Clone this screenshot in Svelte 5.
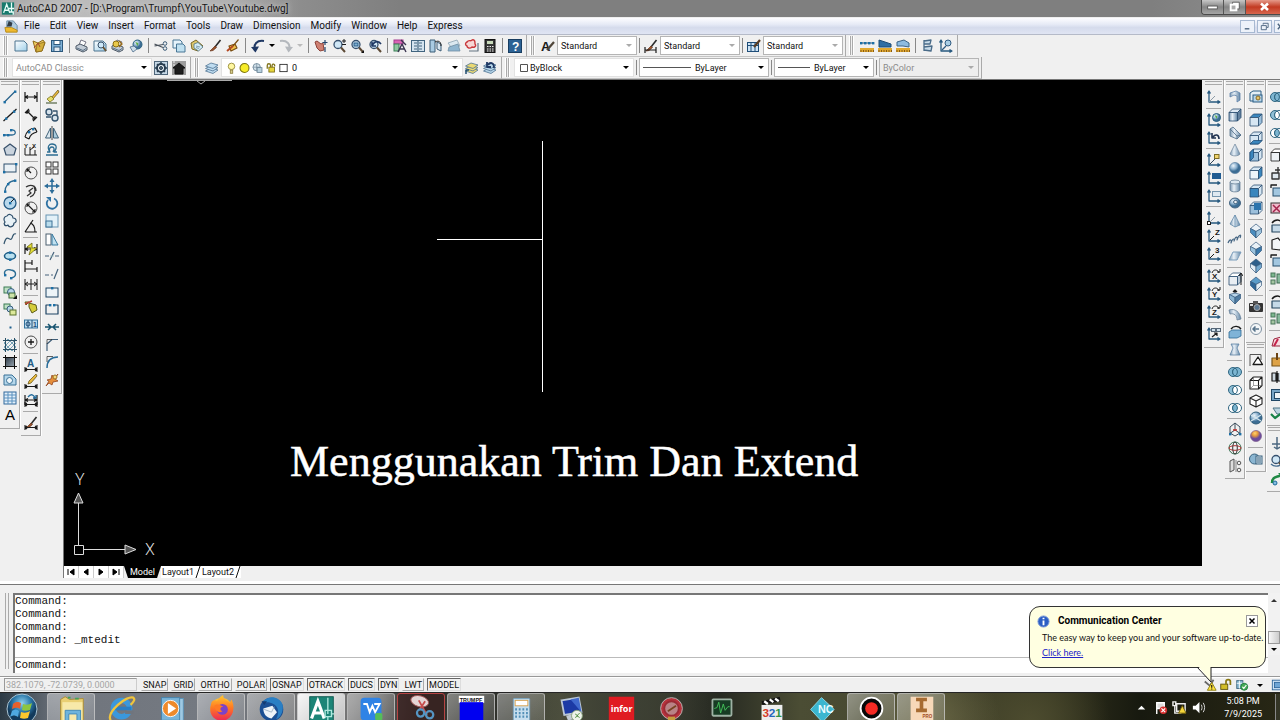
<script>
  const navy = '#1f4e79', ink = '#1a1a1a';
  const p = (d, s = ink, w = 1, f = 'none') => `<path d="${d}" stroke="${s}" stroke-width="${w}" fill="${f}" stroke-linejoin="round"/>`;
  const o = (x, y, r, s = ink, f = 'none', w = 1) => `<circle cx="${x}" cy="${y}" r="${r}" stroke="${s}" stroke-width="${w}" fill="${f}"/>`;
  const b = (x, y, w, h, s = ink, f = 'none') => `<rect x="${x}" y="${y}" width="${w}" height="${h}" stroke="${s}" fill="${f}"/>`;
  const t = (s, x, y, z = 8, f = ink, w = 700) => `<text x="${x}" y="${y}" font-size="${z}" font-weight="${w}" font-family="Liberation Sans, sans-serif" fill="${f}">${s}</text>`;
  const nodes = (...n) => n.map(([x, y]) => `<rect x="${x - 1}" y="${y - 1}" width="2.4" height="2.4" fill="#1d6fa5"/>`).join('');
  const axes = p('M3 2V13H14M1.500 4.500L3 2L4.500 4.500M11.500 11.500L14 13L11.500 14.500', '#27597f', 1.3);
  const cube = (a, c, d) =>
    p('M2 5.500L5.500 2H14L10.500 5.500Z', '#2a4d6e', 0.8, a) + p('M2 5.500H10.500V14H2Z', '#2a4d6e', 0.8, c) + p('M10.500 5.500L14 2V10.500L10.500 14Z', '#2a4d6e', 0.8, d);
  const iso = (a, c, d) =>
    p('M8 1L13.500 5.500L8 8.500L2.500 5.500Z', '#35597c', 0.7, a) + p('M2.500 5.500L8 8.500V15L2.500 9.500Z', '#35597c', 0.7, c) + p('M13.500 5.500L8 8.500V15L13.500 9.500Z', '#35597c', 0.7, d);
  const hi = '#3a86bd', lo = '#d6e6f2', mid = '#9cc0dc';
  const rings = (l, m, r) => o(6, 8, 4.500, '#2f6580', l) + o(10, 8, 4.500, '#2f6580', r) + p('M8 4A4.500 4.500 0 0 1 8 12A4.500 4.500 0 0 1 8 4Z', '#2f6580', 1, m);
  const sheet = p('M2 3H11L14 6V13H2Z', '#4d7590', 1, 'url(#sheet)');
  const printer = p('M5 7L7 2L12 4L10 8', '#667', 0.9, '#fff') + p('M2 8L6 6L13 9V12L9 14L2 11Z', '#4c5866', 1, '#c3ccd6') + p('M3 10L9 12.500L12 10.500', '#5a7085');
  const globe = (x, y, r) => o(x, y, r, '#2a617f', 'url(#ball)') + p(`M${x - r * 0.5} ${y - r * 0.6}l${r * 0.7} ${r * 0.3}l${-r * 0.2} ${r * 0.7}z`, 'none', 0, '#5fae45');
  const lens = o(7, 6.500, 4, '#36506e', '#cfe6f5', 1.3) + p('M10 9.500L14 14', '#5d4a36', 2);
  const brush = p('M13.500 2L8 9', '#2b2b2b', 1.600) + p('M8 8L3 13L6 12.500L9.500 9.500Z', '#67321a', 0.7, '#98532a');
  const pencil = p('M14 1L7 9L5.500 12L8.500 10.500L15 3Z', '#5b4a10', 0.7, '#e9b93c');
  const layers = (f) => ['11', '8.500', '6'].map((y) => `<path d="M1.500 ${y}L7 ${y - 3}L14 ${y - 1}L9 ${+y + 2.500}Z" fill="${f}" stroke="#4f7493" stroke-width=".8"/>`).join('');
  const dim = p('M2 3V13M14 3V13M2 8H14M5 6.500L2 8L5 9.500M11 6.500L14 8L11 9.500', ink, 1.2);
  const lowDim = p('M2 10V15M14 10V15M2 12.500H14M4 11L2 12.500L4 14M12 11L14 12.500L12 14', ink, 1.1);
  const hatch = p('M2 6L6 2M2 10L10 2M2 14L14 2M6 14L14 6M10 14L14 10M2 6L10 14M2 10L6 14M6 2L14 10', '#3e7f9e', 0.7);
  const frame = p('M3.500 1V15M12.500 1V15M1 3.500H15M1 12.500H15', '#2b5065');
  const rule = '<rect x="1" y="10" width="14" height="4" fill="#e2a92f"/>' + p('M2 14V12M4.500 14V12M7 14V12M9.500 14V12M12 14V12M14.500 14V12', '#6e4810', 0.8);

  const icons = {
    new: sheet, open: p('M2 3L7 5L12 2L14 5L11 13L5 14Z', '#8d6b1c', 1, '#f0cf62') + p('M6 6L14 4L11 13L5 14Z', '#8d6b1c', 0.8, '#d3ae3a') + p('M3 10L7 5L9 9', '#a7472f', 1),
    save: b(2.500, 2.500, 11, 11, '#2d587c', '#7fb1d6') + b(5, 2.500, 6, 4, '#2d587c', '#fff') + b(5, 9, 6, 4.500, '#2d587c', '#e2eaf2'),
    plot: printer, preview: sheet + o(9, 7, 3, '#38506a', '#cfe9f8') + p('M11 9L14 13', '#6a5230', 1.800),
    publish: printer + o(6, 6, 3, '#8b6d10', '#e9c84a') + p('M9 3L12 6L9 9', '#9a6d18', 1.4), dwf: globe(9.500, 6.500, 4.500) + p('M2 9L6 8L9 11L5 14Z', '#4b6c89', 0.8, '#cdddea'),
    cut: p('M1.500 6L10 9.500M1.500 8L10 6.500', '#49515a', 1.2) + o(12, 5.500, 1.800, '#3c5c78') + o(12, 10.500, 1.800, '#3c5c78'),
    copy: p('M2 2H9L11 4V10H2Z', '#487695', 1, '#e6f3fb') + p('M5.500 6H12L14 8V14H5.500Z', '#487695', 1, '#bfe0f0'),
    paste: p('M2 5L7 2L14 8L9 13L3 11Z', '#7b6a28', 1, '#dcc66b') + p('M5 6L9 4.500L14 9L9.500 13L5 10Z', '#4f7485', 0.8, '#d5edf5') + p('M7 8L11 9M7 9.500L10 10.500', '#5f8090', 0.7),
    match: brush, block: p('M13.500 1.500L8 8M4 8L10 6L12 10L6 13Z', '#7a4d12', 1.2, '#f0c14a') + p('M2 13L8 8', '#b44822', 2),
    undo: p('M14 3C7 2 3 6 5 13', '#1f3864', 2) + p('M1 9L5.500 14.500L9 8.500Z', 'none', 0, '#1f3864'),
    redo: p('M2 3C9 2 13 6 11 13', '#b4b8bd', 2) + p('M15 9L10.500 14.500L7 8.500Z', 'none', 0, '#b4b8bd'),
    pan: p('M2 4L4 3L8 6L10 5L11 12L7 13L4 10Z', '#8c4137', 1, '#cf8072') + p('M12 2V7M9.500 4.500H14.500M12 9V14', '#24466d', 1.2), zoomrt: lens + p('M11 3H15M13 1V5M11 6.500H15', ink, 1),
    zoomwin: lens + b(5, 5, 4, 3, '#2b5f8a', '#7faed0') + p('M15 12V15H12Z', 'none', 0, '#111'), zoomprev: lens + p('M5 8C8 2 12 3 14 6M5 4V8H9', '#1f3864', 1.600),
    props: b(2, 2, 9, 4, '#a33a8e', '#d965b5') + b(2, 6, 5, 7, '#3a8157', '#8fc7a0') + p('M6 14L10 6L14 14M7 11H13M9 2L14 7', '#3a3550', 1.400), center: b(1.500, 2.500, 13, 11, '#41647f', '#d4e3ee') + p('M4 5H7M4 8H7M4 11H7M9 5H12M9 8H12M9 11H12M8 3V13', '#41647f', 1.200),
    palettes: p('M2 2H7V14H2Z', '#3b5c76', 1, '#a9cbe2') + p('M9 4L13 6V13L9 11Z', '#3b5c76', 1, '#d8e6f0') + p('M7 4C11 2 13 4 13 8', ink), sheetset: p('M2 5L11 2L14 8L5 9Z', '#8ba3b3', 0.8, '#dbe8f0') + p('M3 9L12 6L14 13L2 13Z', '#6f8ea3', 0.8, '#8fb5cf'),
    markup: p('M3 4C5 1 7 4 8 2C11 1 11 4 11 6C13 8 10 10 8 9C6 11 3 10 3 8C1 7 1 5 3 4Z', '#c9383b', 1.400, '#f7d7d5') + p('M5 13H14V5', '#657482', 1.200), calc: b(3, 1.500, 10, 13, '#111', '#353535') + '<path d="M5 3H11V6H5Z" fill="#c7d9b9"/>' + p('M5 8.500H6.500M7.500 8.500H9M10 8.500H11.500M5 11H6.500M7.500 11H9M10 11H11.500M5 13H6.500M7.500 13H9M10 13H11.500', '#eee', 1.200),
    help: '<rect x="1.500" y="1.500" width="13" height="13" fill="#2c6294" stroke="#183d61"/>' + t('?', 5, 12.500, 12, '#fff'), tstyle: t('A', 1, 13, 13) + p('M14 4L7 12', '#50463a', 2.200),
    dstyle: brush + p('M2 9V15M13 9V15M2 12H13', ink, 1.200), tbstyle: b(1.500, 4.500, 11, 9, navy, '#cfe4f5') + p('M1.500 7.500H12.500M5 4.500V13.500M9 4.500V13.500', navy) + p('M14 2L8 9', '#5a3c22', 2.200),
    dist: rule + p('M2 5H14', navy, 1, 'none') + nodes([2, 5], [6, 5], [10, 5], [14, 5]), area: rule + p('M2 9V2L8 4L14 6V9Z', '#1d4c75', 1, '#2f6ea3'), mass: rule + p('M2 8V4L9 2L14 5V9L8 8Z', '#3b6487', 1, '#8dbbe0'),
    list: p('M4 2V13M4 3L11 2L10 6L4 6M4 9L12 8L11 13L4 12', '#4a6c89', 1.300, '#c9dcea'), locate: axes + o(10, 5, 3, '#315c82', '#a9cde4') + p('M8 8L4 12', '#315c82', 1.300),
    line: p('M2.500 13L13 2.500', '#28608a', 1.300) + nodes([2.500, 13], [13, 2.500]), xline: p('M1.500 14L14.500 2', ink, 1.300) + nodes([4, 11.500], [12, 4.500]), pline: p('M2 10H10C15 10 14 4 9 5', '#2b6a92', 1.300) + nodes([2, 10], [6, 10], [9, 5]),
    polygon: p('M8 2L14 6.500L12 13H4L2 6.500Z', '#38516b', 1.200, '#c9d3dd'), rect: b(2, 4, 12, 8, '#2c4f6d', '#eaf1f6') + nodes([2, 12], [14, 4]), arc: p('M3 14C3 8 7 3 13 2.500', '#2b6a92', 1.300) + nodes([3, 13.500], [6, 6], [13, 2.500]),
    circle: o(8, 8, 6, '#245b85', '#b8d8ec', 1.300) + p('M8 8L12 4', ink) + nodes([8, 8]), cloud: p('M5 3C7 0 11 2 11 5C15 5 15 10 12 10C12 14 7 15 6 12C3 14 1 11 3 9C1 7 2 3 5 3Z', '#2f4f6b', 1.200, '#e8f1f6'), spline: p('M2 13C5 1 8 12 10 7C11 4 12 2 14 3', '#34566f', 1.200),
    ellipse: '<ellipse cx="8" cy="8" rx="5.500" ry="3.500" fill="#b9e0ef" stroke="#195a83" stroke-width="1.500"/>' + nodes([8, 4.500], [8, 11.500]), earc: p('M3 9C1 4 6 3 9 4C15 5 15 11 9 12', '#2a6c93', 1.400) + nodes([3, 9], [9, 12]),
    insert: b(2, 3, 7, 6, '#3a7b54', '#bfe0c4') + o(9, 8, 3.500, '#365d7c', '#b6d5ea') + b(7, 9, 6, 5, '#3b6a3b', '#cde2a8') + p('M15 11V15H11Z', 'none', 0, '#111'), mkblock: b(2, 3, 6, 5, '#3a7b54', '#bfe0c4') + o(8, 8, 3, '#365d7c', '#b6d5ea') + b(8, 9, 6, 5, '#5b732c', '#dde99a'), point: '<rect x="7.500" y="7.500" width="2" height="2" fill="#1d5f8d"/>',
    hatch: hatch + frame, gradient: '<rect x="3" y="3" width="10" height="10" fill="url(#dark)"/>' + frame.replace('#2b5065', '#111'), region: p('M2 3H10L14 7V13H2Z', '#397096', 1, '#b5d7eb') + o(7.500, 8.500, 3, '#397096', '#eef7fb'), table: b(2, 2, 12, 12, '#30699b', '#e4f0fa') + p('M2 5H14M2 8H14M2 11H14M6 2V14M10 2V14', '#5b91bf'), mtext: t('A', 3, 13, 15, '#000', 400),
    dlin: dim, dali: p('M2 6L6 2M10 14L14 10M4 4L12 12M4 7V4H7M12 9V12H9', ink, 1.200), darc: p('M2 12C3 7 7 3 12 3M6 14C7 10 9 8 14 7M2 12L6 14M12 3L14 7', ink, 1.200) + nodes([6, 7], [10, 4]), dord: p('M2 13H14M2 13V6M7 13V5M12 13V8M7 8L11 5', ink) + t('Y', 1, 6, 6) + t('X', 9, 6, 6),
    drad: o(8, 8, 6, '#4b4b4b') + p('M8 8L4 4M4 7V4H7', ink, 1.200), djog: p('M3 4C7 1 13 2 13 8M11 3C13 8 12 12 7 14M4 13L8 10L6 8L10 5', '#333', 1.300), ddia: o(8, 8, 6, '#4b4b4b') + p('M4 4L12 12M4 7V4H7M12 9V12H9', ink, 1.100), dang: p('M2 14H14M2 14L10 2M7 5C11 6 12 10 12 14', ink, 1.200),
    quick: dim + p('M9 2L4 6L8 7L6 14L14 7L9 7Z', '#6a6412', 0.8, '#e4df35'), base: p('M2 2V14M9 2V7M14 9V14M2 5H9M2 11H14', ink, 1.200), cont: p('M2 3V14M8 3V14M14 3V14M2 8H14M5 6L2 8L5 10M11 6L14 8L11 10', ink), leader: p('M2 3H6L3 6L2 3M6 4L13 6L14 11L9 14L6 8Z', '#5c5b18', 1, '#d5cc3a') + p('M2 5L9 2', '#b64238', 1.400),
    tol: b(1.500, 4, 13, 8, '#34729c', '#bcdcef') + o(5, 8, 2, navy) + p('M5 4V12M9 4V12', navy) + t('1', 10, 11, 7, navy), cmark: o(8, 8, 6, '#4b4b4b') + p('M8 5V11M5 8H11', ink, 1.300), dedit: lowDim + t('A', 4, 9.500, 10, '#215a83'), dtedit: lowDim + pencil.replace('d="M14 1L7 9L5.500 12L8.500 10.500L15 3Z"', 'd="M13 0L6 7L5 10L8 9L14 2Z"'), dupd: dim + p('M5 5C8 1 11 3 12 6M10 6H13V3', '#226b9b', 1.300) + lowDim, dbrush: brush + lowDim,
    erase: pencil + p('M2 14H13', '#374a25') + p('M7 7L10 10L6 13L3 10Z', '#7a731e', 0.8, '#e6dd68'), copyob: o(5, 5, 3, '#34536d', '#d7e3ec', 1.400) + o(11, 11, 3, '#34536d', '#d7e3ec', 1.400) + p('M9 4H13V8M2 10H7', '#34536d', 1.300), mirror: p('M6.500 3V13H1.500Z', '#3e6178', 1, '#dce8ef') + p('M9.500 3V13H14.500Z', '#3e6178', 1, '#a9cbdc') + p('M8 1V15', ink, 0.8), offset: p('M2 13H14M3 10H6C2 4 6 2 8 2C12 2 14 5 10 10H13M6 10C4 6 7 5 8 5C10 5 11 7 9 10', '#2c6c91', 1.300),
    array: b(2, 2, 5, 5, '#333', '#fff') + b(9, 2, 5, 5, '#333', '#fff') + b(2, 9, 5, 5, '#333', '#fff') + b(9, 9, 5, 5, '#333', '#fff'), move: p('M8 2V14M2 8H14', '#2b6c99', 1.500) + p('M8 0L10.500 4H5.500ZM8 16L10.500 12H5.500ZM0 8L4 5.500V10.500ZM16 8L12 5.500V10.500Z', 'none', 0, '#2b6c99'), rotate: p('M4 5A5.300 5.300 0 1 0 10 3.500', '#2f72a3', 1.800) + p('M2 2H7V7Z', 'none', 0, '#2f72a3'), scale: b(2, 2, 12, 12, '#6896b4', '#e3f1f8') + b(2, 8, 6, 6, '#3e7397', '#b9dcec'), stretch: b(2, 3, 5, 11, '#4d6070', '#fff') + p('M8 3L14 14H8Z', '#36799f', 1, '#c0e0ef'),
    trim: p('M1 8H5M11 8H15M6 12L10 4', '#46637c', 1.200) + p('M6 8H10', '#9bb', 0.7), extend: p('M1 9H5M7 9H9M10 13L14 3', '#46637c', 1.200), breakp: b(2, 4, 12, 9, '#1e4464', '#edf4f8') + nodes([8, 4]), brk: p('M6 4H2V13H14V4H10', '#1e4464', 1.200) + nodes([6, 4], [10, 4]), join: p('M1 8H15M4 5L7 8L4 11M12 5L9 8L12 11', '#16536f', 1.500), chamfer: p('M3 14V7L8 2.500H14', '#3f5e78', 1.200) + p('M3 7V2.500H8', '#222', 0.7), fillet: p('M3 14C3 7 7 3 14 3', '#286c99', 1.500) + p('M3 8V2.500H9', '#222', 0.7), explode: p('M2 14L5 9L3 8L7 7L8 3L10 6L14 2L11 7L14 9L9 10L8 13L5 11Z', '#93461f', 0.8, '#e58e3b') + o(11, 5, 2, '#9e7122', '#f3d679'),
    ucs: axes + p('M3 13L9 7', '#8c9aa5'), ucsw: axes + globe(10.500, 5.500, 4), ucsp: axes + p('M13 9C13 4 9 4 7 7M6 3V8H10', '#1d2f4d', 1.600), ucsf: axes + p('M4 12L9 7', '#345') + b(8.500, 2.500, 4.500, 4, '#7c6b22', '#f0d26b'), ucso: axes + '<rect x="6" y="3" width="9" height="6" fill="#205b91"/>', ucsv: axes + b(6.500, 3.500, 8, 5, '#7494ad', '#dfe9f1'), ucs0: axes + b(1.500, 11.500, 3, 3, ink, '#fff') + p('M4 12L9 7', '#8c9aa5'), ucsz: axes + p('M4 12L8 8') + t('Z', 9, 7, 8), ucs3: axes + p('M4 12L8 8') + t('3', 9, 7, 8),
    rx: axes + p('M6 5C7 1 12 1 13 5M11 4H14V1') + t('X', 6, 11, 8), ry: axes + p('M6 5C7 1 12 1 13 5M11 4H14V1') + t('Y', 6, 11, 8), rz: axes + p('M6 5C7 1 12 1 13 5M11 4H14V1') + t('Z', 6, 11, 8), ucsa: axes + b(5.500, 2.500, 4, 3, '#567', '#cfe0ec') + b(10.500, 2.500, 4, 3, '#567', '#cfe0ec') + p('M6 11L11 7M11 10V7H8', ink, 1.200),
    polys: p('M3 4L9 2L13 4V11L10 13V7L7 6L3 8Z', '#5e82a8', 0.8, 'url(#solid)'), box: cube('#dce8f3', 'url(#solid)', '#64829f'), wedge: p('M3 4L6 2L14 10L10 14L3 11Z', '#4f6c86', 0.8, 'url(#solid)') + p('M3 4L10 11V14M10 11L14 10', '#4f6c86', 0.8), cone: p('M8 2L13 12C11 14.500 5 14.500 3 12Z', '#6c8399', 0.7, 'url(#solid)'), sphere: o(8, 8, 5.500, '#567b9d', 'url(#ball)', 0.7), cyl: p('M3 4V12C4 14.500 12 14.500 13 12V4', '#567189', 0.7, 'url(#solid)') + '<ellipse cx="8" cy="4" rx="5" ry="2" fill="#dce7f0" stroke="#567189" stroke-width=".7"/>', torus: '<ellipse cx="8" cy="8" rx="5.500" ry="5" fill="url(#ball)" stroke="#476784"/><ellipse cx="8.500" cy="7" rx="2" ry="1.600" fill="#eef1f4" stroke="#476784"/>', pyr: p('M8 2L13 12L8 14L3 11Z', '#5781a4', 0.7, 'url(#solid)') + p('M8 2V14', '#5781a4', 0.7),
    helix: p('M1 12C3 7 5 9 4 12C6 6 8 8 7 10C9 4 11 6 10 9C12 3 15 3 13 7', '#476784', 1.200), plane: p('M6 4H14L10 12H2Z', '#7b9dbb', 1, 'url(#solid)'), extrude: cube('#fff', '#e9eef3', '#b9c8d6') + p('M14 14V3M12 5L14 2L16 5', ink), press: p('M8 1V6M6 3L8 1L10 3', ink, 1.200) + iso('#b8d4e9', '#8db6d4', '#4f7ba1').replaceAll('M8 1L', 'M8 4L'), sweep: p('M2 4C8 2 13 6 14 13L10 14C10 9 7 7 3 8Z', '#688299', 0.8, 'url(#solid)'), revolve: p('M2 8L5 6H14V12L10 14H2Z', '#2f6994', 0.8, '#7fb3d7') + p('M4 5C7 1 12 2 14 5', ink, 1.400), loft: p('M4 2H12L10 6L13 13H3L6 6Z', '#5d83a5', 0.8, 'url(#solid)'),
    union: rings('#7cb5d1', '#7cb5d1', '#7cb5d1'), subtract: rings('#8fbfd6', '#fff', '#fff'), intersect: rings('#fff', '#7cb5d1', '#fff'), m3d: p('M8 1L13 5V11M8 1L3 5V11M8 1V8M8 8L2 12M8 8L14 12M3 11L8 14L13 11', '#3a4c5a') + nodes([3, 12], [13, 12]) + p('M6 8H10', '#c3322d', 1.600), r3d: o(8, 8, 6, '#2d6b4b') + '<ellipse cx="8" cy="8" rx="6" ry="2.300" fill="none" stroke="#b63232"/><ellipse cx="8" cy="8" rx="2.300" ry="6" fill="none" stroke="#333"/>', a3d: p('M3 3L7 1V12L3 14Z', '#555', 1, '#ddd') + o(12, 5, 1.800, '#555') + o(12, 12, 1.800, '#555') + p('M9 2V14', '#888'),
    views: p('M2 4L5 2H13V12H2Z', '#2a5d83', 1, '#e5eff6') + b(5, 6, 9, 7, '#2a5d83', '#b8d6ea') + o(10, 9, 2, '#8a6826', '#e5c66a'), top: cube(hi, lo, mid), bottom: cube(lo, lo, lo) + p('M2 14L5.500 10.500H14L10.500 14Z', navy, 0.8, hi), left: cube(lo, mid, lo) + p('M2 5.500L5.500 2V10.500L2 14Z', navy, 0.8, hi), right: cube(lo, '#eef5fa', hi), front: cube(lo, hi, lo), back: cube(lo, mid, lo) + '<rect x="6" y="3" width="7" height="7" fill="#2b74ad"/>', sw: iso('#e9f1f7', '#4a8dbf', '#9bc3de'), se: iso('#e9f1f7', '#9bc3de', '#3979ac'), ne: iso('#2d5f8b', '#e3edf5', '#74a9cf'), nw: iso('#5a9bc8', '#2e6799', '#e3edf5'),
    camera: '<rect x="1" y="4" width="14" height="9" rx="1" fill="#333"/><rect x="5" y="2" width="5" height="3" fill="#555"/>' + o(9, 8.500, 3, '#aaa', '#5b7791') + '<rect x="2" y="5" width="3" height="2" fill="#ddd"/>', prev: o(8, 8, 5.500, '#8193a3', '#f2f5f7') + p('M11 8H5M7.500 5.500L5 8L7.500 10.500', '#57738b', 1.600), vs2d: p('M2 14V2.500H13V8', '#555') + p('M5 12.500L10 5L14.500 12.500Z', ink, 1.300, '#fff'), wire: p('M2 5.500H10.500V14H2ZM5.500 2H14V10.500L10.500 14M2 5.500L5.500 2M10.500 5.500L14 2', ink, 1.100, '#fff') + p('M5.500 2V10.500H14M5.500 10.500L2 14', '#666', 0.6), hidden: p('M8 2L14 5V11L8 14L2 11V5ZM2 5L8 8L14 5M8 8V14', '#222', 1.100, '#fff'), real: o(8, 8, 6, '#305e7b', 'url(#ball)') + p('M3 5L13 11M13 5L3 11', '#d6e7ee', 1.200), concept: o(8, 8, 5.500, '#7e5c8d', 'url(#sunset)', 0.7), vsm: o(6.500, 8, 5, '#38617d', '#8ab5d1') + b(8, 5, 6, 8, '#38617d', '#d8e7f1') + p('M9 7H13M9 9H13M9 11H13', '#38617d'),
    face: cube('#fff', '#eef2f5', '#8aa2b7').replaceAll('#2a4d6e', ink), movef: p('M3 8H10V14H3ZM9 2V8M6 5H12', '#333', 1.400, '#dfe7ed'), del: b(2, 3, 11, 10, '#333', '#efbccb') + p('M4 5L11 12M11 5L4 12', '#a3244c', 1.500), rotf: p('M3 7H13V14H3Z', '#26475f', 1.200, '#c6dae8') + p('M3 5C6 1 11 1 13 5', ink, 1.400), taper: p('M3 4L9 2L14 8L11 14L3 13Z', ink, 1.200, '#f4f6f8'), copyf: b(4, 5, 10, 8, '#274e6c', '#a3c7e0') + p('M2 5V2H8', ink, 1.300), color: b(2, 2, 4, 4, '#49755b', '#7bb78d') + b(2, 9, 4, 4, '#49755b', '#a4c5a1') + b(8, 3, 7, 9, '#3e6a53', '#86b89b'), imprint: p('M3 12L5 5L12 3L14 12Z', '#97263d', 1, '#f7dce2') + p('M5 12L9 5', '#c5234b', 2), clean: p('M3 6H14V14H3Z', '#795519', 1.200, '#dda246') + p('M8 1V8', '#6b4211', 2), sep: p('M3 4V12H7V4ZM9 4V12H14V4M8 2V14', ink, 1.200, '#ccd7df'), shell: b(2.500, 2.500, 11, 11, '#214765', '#77a5c7') + b(5.500, 5.500, 6, 6, '#214765', '#eef4f8'), check: p('M4 3H14V9H8Z', '#4f7587', 1, '#bcd5e0') + p('M2 9L6 13L14 7', '#188247', 2.200),
    anchor3: p('M8 2V14M3 9H13M5 12L8 14L11 12', '#4b6780', 1.500), orbit: lens + p('M2 11C6 15 12 13 14 9', '#456d91', 1.300), walk: p('M3 12C3 4 10 7 13 3', '#1f8844', 2.500) + p('M9 2H15V8Z', 'none', 0, '#1f8844') + o(6, 12, 2, '#1b6a9a', '#85bde0'),
    layers: layers('#bfdcf0'), gear: b(1.500, 1.500, 13, 13, '#4e6579', '#c6d8e6') + o(8, 8, 4, '#273c4f', '#eef4f8', 2) + o(8, 8, 1.500, '#273c4f', '#567') + p('M8 2V4M8 12V14M2 8H4M12 8H14M4 4L5 5M11 11L12 12M12 4L11 5M5 11L4 12', '#273c4f', 1.500), home: '<rect x="1" y="1" width="14" height="14" fill="#9b9b9b"/>' + p('M2 8L8 3L14 8H12V14H4V8Z', '#111', 1, '#1c1c1c') + p('M2 2H4M2 5H4', '#eee'),
    bulb: o(8, 6, 4, '#8d802a', '#fff7a0') + b(6.500, 10.500, 3, 4, '#8a7b3c', '#d9cf8b'), sun: o(8, 8, 5.500, '#7d7510', '#f7ec28', 1.300), frz: o(7, 7, 4.500, '#6b8496', '#d3e2eb') + b(7.500, 7.500, 6, 6, '#6b8496', '#b9d1de') + p('M7 2V12M2 7H12', '#6b8496', 0.8), unlock: b(6, 7, 7, 6, '#776812', '#e5d53c') + p('M4 9V5C4 2 8 2 8 5V7M10 7V5C10 2 14 3 13 6', '#81741c', 1.600), swatch: b(3.500, 3.500, 9, 9, ink, '#fff'),
    lmake: layers('#ead973') + p('M2 14V10H5', '#214d70', 1.500), lprev: layers('#b6d5e9') + p('M12 8C12 2 8 2 6 5M5 2V7H9', '#1f3864', 1.800), warn: p('M2 4L8 9L12 2', '#666', 2) + p('M10 5L15 14H5Z', '#8a7a10', 1, '#ffe33e') + p('M10 8V11M10 12V13', '#111', 1.300), lock: b(2, 7, 8, 6, '#5d520a', '#d2bd28') + p('M8 7V4C8 1 13 1 13 4V8', '#8a7912', 2), std: b(2, 3, 7, 9, '#3c637c', '#85b7d0') + p('M5 3V12M2 6H9', '#fff') + o(10.500, 10, 4, '#1a7b3c', '#44aa55') + p('M8.500 10L10 12L13 8', '#fff', 1.400), screen: b(1.500, 2.500, 13, 11, '#2d659a', '#cbe2f5') + b(4, 5, 9, 6, '#2d659a', '#6da5d5')
  };

  const menus = ['File', 'Edit', 'View', 'Insert', 'Format', 'Tools', 'Draw', 'Dimension', 'Modify', 'Window', 'Help', 'Express'];
  const standard = 'new open save | plot preview publish dwf | cut copy paste match block | undo v redo w | pan zoomrt zoomwin zoomprev | props center palettes sheetset markup calc | help'.split(' ');
  const styles = [['tstyle', 'Text style'], ['dstyle', 'Dimension style'], ['tbstyle', 'Table style']];
  const inquiry = 'dist area mass | list locate'.split(' ');
  const left = [
    ['line xline pline polygon rect arc circle cloud spline ellipse earc insert mkblock point hatch gradient region table mtext'],
    ['dlin dali darc dord | drad djog ddia dang | quick base cont | leader tol cmark | dedit dtedit dupd | dbrush'],
    ['erase copyob mirror offset array move rotate scale stretch trim extend breakp brk join chamfer fillet explode']
  ];
  const right = [
    ['ucs | ucsw ucsp | ucsf ucso ucsv | ucs0 ucsz ucs3 | rx ry rz | ucsa'],
    ['polys box wedge cone sphere cyl torus pyr helix plane | extrude press sweep revolve loft | union subtract intersect | m3d r3d a3d'],
    ['views | top bottom left right front back | sw se ne nw | camera | prev', 'vs2d | wire hidden real concept | vsm'],
    ['union subtract intersect | face movef copyf del rotf taper copyf color | rotf color | imprint clean sep shell check', 'anchor3 orbit walk']
  ];
  const modes = [['SNAP', 0], ['GRID', 0], ['ORTHO', 0], ['POLAR', 0], ['OSNAP', 1], ['OTRACK', 1], ['DUCS', 1], ['DYN', 1], ['LWT', 0], ['MODEL', 1]];
  const history = ['Command:', 'Command:', 'Command:', 'Command: _mtedit'];

  const apps = [
    ['Explorer', 'open', '<path d="M4 6L9 3L14 6L29 5V30H4Z" fill="#e9cf73" stroke="#a98a33"/><path d="M6 9H28V30H6Z" fill="#f7e9a9"/><path d="M12 4H15M20 5H24" stroke="#43a25a" stroke-width="2"/><path d="M9 18H26V30H22V22H13V30H9Z" fill="#6eb4dc" stroke="#3e87b8"/>'],
    ['Internet Explorer', '', '<circle cx="16" cy="16" r="9" fill="none" stroke="#3b98dc" stroke-width="6"/><path d="M9 16H27" stroke="#2a7fc4" stroke-width="4"/><path d="M20 20H29" stroke="#70757d" stroke-width="4"/><path d="M4 29C-1 20 22 1 29 4C32 6 28 10 26 12" fill="none" stroke="#f0c43c" stroke-width="2.500"/>'],
    ['Media Player', '', '<rect x="11" y="5" width="18" height="25" fill="#9fc9e3" stroke="#5a94ba"/><rect x="5" y="4" width="20" height="25" fill="#79b4d8" stroke="#4584ae"/><circle cx="15" cy="16" r="9" fill="#ee8a2b" stroke="#fff"/><path d="M12 10L21 16L12 22Z" fill="#fff"/>'],
    ['Firefox', 'open', '<circle cx="16" cy="17" r="12.500" fill="url(#fox)"/><path d="M5 9C7 6 10 7 11 8C14 3 16 2 18 1C17 5 22 7 25 10L27 6C33 18 26 29 16 29C6 29 2 18 5 9Z" fill="url(#fox)"/><circle cx="17" cy="17" r="6" fill="#7b42c9"/><path d="M8 13C12 10 15 13 18 14C14 14 14 18 17 19C14 22 9 19 8 13Z" fill="#ff7a24"/>'],
    ['Thunderbird', 'open', '<circle cx="16" cy="17" r="13" fill="#1b4f93"/><path d="M6 9C12 1 24 2 28 11C30 18 26 26 21 28C26 19 23 11 13 9Z" fill="#2a7fc4"/><path d="M7 16L17 13L22 20L16 27C10 26 7 22 7 16Z" fill="#eef3f8"/><path d="M8 17L16 20L19 14" fill="none" stroke="#9fb3c6"/><path d="M5 8L11 8L8 12Z" fill="#143b72"/>'],
    ['AutoCAD', 'open lit', '<rect x="3" y="3" width="26" height="29" fill="#1c8577" stroke="#0d564e"/><path d="M5 27L12 8L19 27M8 21H16" stroke="#fff" stroke-width="3.500" fill="none"/><path d="M23 4V22M20 18V25H27V18ZM27 22H30M23 25V30" stroke="#aee8dd" stroke-width="1.500" fill="none"/>'],
    ['WPS', 'open', '<rect x="4" y="4" width="23" height="25" rx="4" fill="#2f83e5"/><path d="M7 11H11L14 20L17 13L20 20L25 11H19" fill="none" stroke="#fff" stroke-width="2"/><rect x="20" y="21" width="8" height="8" rx="2" fill="#55bd59"/>'],
    ['Snipping Tool', 'open snip', '<ellipse cx="14" cy="8" rx="10" ry="6" fill="#e4d5d5" stroke="#a25656" transform="rotate(15 14 8)"/><path d="M13 7L22 23M20 8L14 17" stroke="#c64c4c" stroke-width="2"/><circle cx="15" cy="21" r="4" fill="none" stroke="#5595c3" stroke-width="2.500"/><circle cx="25" cy="23" r="4" fill="none" stroke="#5595c3" stroke-width="2.500"/>'],
    ['Trumpf', 'open', '<rect x="2" y="2" width="28" height="8" fill="#fff"/><rect x="3" y="9" width="26" height="23" fill="#0000f0"/><text x="3" y="9" font-size="6" font-weight="700" font-family="Liberation Sans, sans-serif" fill="#111">TRUMPF</text>'],
    ['Calculator', 'open', '<rect x="7" y="5" width="18" height="26" rx="1" fill="#c6deee" stroke="#7ba4c0"/><rect x="9" y="7" width="14" height="6" fill="#fff" stroke="#d9a04b"/><path d="M9 17H23M9 21H23M9 25H23" stroke="#528fb7" stroke-width="2.500" stroke-dasharray="2 2"/>'],
    ['Remote Desktop', '', '<path d="M5 7L24 4L27 20L8 23Z" fill="#1c3aa5" stroke="#b9c6d6" stroke-width="2"/><path d="M15 6L24 4L27 20Z" fill="#4069cd"/><path d="M10 24L23 21L25 27L12 29Z" fill="#c2cbd3"/><circle cx="22" cy="24" r="6" fill="#eef3ea" stroke="#84a07a"/><path d="M20 22L23 24L20 26M25 21L22 24L25 26" stroke="#4c8b3c" fill="none"/>'],
    ['Infor', '', '<rect x="2" y="3" width="28" height="29" fill="#e01b22"/><text x="4" y="20" font-size="10" font-weight="700" font-family="Open Sans, sans-serif" fill="#fff">infor</text>'],
    ['Gauge', '', '<circle cx="16" cy="16" r="12" fill="#b7323c" stroke="#bbb"/><circle cx="16" cy="16" r="8" fill="#b98386" stroke="#9a2a35" stroke-width="2"/><path d="M12 19L21 13" stroke="#742" stroke-width="2"/><rect x="12" y="25" width="8" height="4" fill="#c39c3d"/>'],
    ['Monitor', '', '<rect x="6" y="6" width="21" height="18" rx="1" fill="#173c24" stroke="#9db2a4" stroke-width="2"/><path d="M8 16L11 15L13 9L15 21L18 11L20 18L23 14H25" stroke="#44c45a" fill="none"/>'],
    ['Media Classic', '', '<rect x="5" y="12" width="23" height="19" fill="#eee"/><path d="M5 8L25 3L26 8L6 12Z" fill="#111"/><path d="M8 8L12 11M14 6L18 9M20 5L24 8" stroke="#fff" stroke-width="2.500"/><g font-size="13" font-weight="700" font-family="Liberation Sans, sans-serif"><text x="6" y="25" fill="#d73b27">3</text><text x="13" y="25" fill="#2567bd">2</text><text x="20" y="25" fill="#329447">1</text></g>'],
    ['NC', '', '<path d="M16 4L30 17L17 31L4 17Z" fill="#3bb6cf" stroke="#8ddbe8"/><text x="12" y="21" font-size="12" font-weight="700" font-family="Liberation Sans, sans-serif" fill="#e9fbff">NC</text>'],
    ['Recorder', 'open', '<circle cx="16" cy="16" r="12" fill="#080808" stroke="#fff" stroke-width="2"/><circle cx="16" cy="16" r="7" fill="#f52a24"/>'],
    ['Inventor', 'open', '<rect x="4" y="3" width="25" height="29" fill="#f7d8b9"/><path d="M10 4H22V8H18V16H22V20H10V16H14V8H10Z" fill="#a76b31"/><text x="17" y="26" font-size="5" font-weight="700" font-family="Liberation Sans, sans-serif" fill="#a34c23">PRO</text>']
  ];
</script>

{#snippet icon(name)}
  <svg class="ico" viewBox="0 0 16 16" aria-hidden="true">{@html icons[name]}</svg>
{/snippet}

{#snippet tool(name)}
  {#if name === '|'}
    <span class="sep"></span>
  {:else if name === 'v' || name === 'w'}
    <button class="drop" class:off={name === 'w'} aria-label="More"><i class="tri"></i></button>
  {:else}
    <button class="tool" aria-label={name}>{@render icon(name)}</button>
  {/if}
{/snippet}

{#snippet combo(label, value, cls)}
  <span class="combo {cls}">
    {#if cls.includes('lyr')}
      {#each ['bulb', 'sun', 'frz', 'unlock', 'swatch'] as n}{@render icon(n)}{/each}
    {:else if cls.includes('clr')}
      {@render icon('swatch')}
    {:else if cls.includes('rule')}
      <span class="stroke"></span>
    {/if}
    <select aria-label={label}><option>{value}</option></select>
    <i class="tri"></i>
  </span>
{/snippet}

{#snippet rails(cols)}
  {#each cols as parts}
    <div class="rail">
      {#each parts as part}
        <div class="vbar">
          <span class="grip"></span>
          {#each part.split(' ') as n}{@render tool(n)}{/each}
        </div>
      {/each}
    </div>
  {/each}
{/snippet}

{#snippet slash()}
  <svg class="slash" viewBox="0 0 6 12" aria-hidden="true"><path d="M5 0L1 12" stroke="#111" fill="none" /></svg>
{/snippet}

<svg class="defs" aria-hidden="true">
  <defs>
    <linearGradient id="sheet" x2="1" y2="1"><stop stop-color="#fff" /><stop offset="1" stop-color="#9fd0ea" /></linearGradient>
    <linearGradient id="solid" x2="1" y2="0"><stop stop-color="#7d99b3" /><stop offset=".4" stop-color="#e9f1f8" /><stop offset="1" stop-color="#6286a6" /></linearGradient>
    <linearGradient id="dark" x2="1" y2="1"><stop stop-color="#2a3744" /><stop offset="1" stop-color="#9aa7b2" /></linearGradient>
    <linearGradient id="fox" x2="0" y2="1"><stop stop-color="#ffc933" /><stop offset=".5" stop-color="#ff7a22" /><stop offset="1" stop-color="#ea2b55" /></linearGradient>
    <radialGradient id="ball" cx=".35" cy=".3"><stop stop-color="#eef6fc" /><stop offset=".6" stop-color="#8fb3d0" /><stop offset="1" stop-color="#3c6d94" /></radialGradient>
    <radialGradient id="sunset" cx=".4" cy=".25"><stop stop-color="#ffd36e" /><stop offset=".5" stop-color="#e59a3e" /><stop offset="1" stop-color="#6b4c9c" /></radialGradient>
    <radialGradient id="orb" cx=".5" cy=".3"><stop stop-color="#8fd0ee" /><stop offset=".6" stop-color="#2a77a8" /><stop offset="1" stop-color="#123a5c" /></radialGradient>
  </defs>
</svg>

<div class="app">
  <header class="title">
    <svg class="logo" viewBox="0 0 16 16" aria-hidden="true"><rect x="1" y="1" width="14" height="14" fill="#167a6d" /><path d="M3 13L6.500 3L10 13M4 10H9M12 1V12M9 8H15M10 12H14V15" stroke="#e7fffa" stroke-width="1.500" fill="none" /></svg>
    <h1>AutoCAD 2007 - [D:\Program\Trumpf\YouTube\Youtube.dwg]</h1>
    <div class="caption">
      <button aria-label="Minimize"><svg viewBox="0 0 22 14"><rect x="6" y="6" width="10" height="3" fill="#fff" stroke="#444" stroke-width=".8" /></svg></button>
      <button aria-label="Restore"><svg viewBox="0 0 22 14"><path d="M9 2H16V9H13V5H9Z" fill="#fff" stroke="#444" stroke-width=".8" /><rect x="7" y="4.500" width="6" height="6" fill="#aaa" stroke="#fff" stroke-width="2" /></svg></button>
      <button class="close" aria-label="Close"><svg viewBox="0 0 34 14"><path d="M15 3.500L22 10M22 3.500L15 10" stroke="#fff" stroke-width="2.500" /></svg></button>
    </div>
  </header>

  <nav class="menu">
    <svg class="doc" viewBox="0 0 16 16" aria-hidden="true"><path d="M3 2H10L14 7V13H3Z" fill="#aecbe0" stroke="#6a8aa1" /><path d="M1 9L8 9L14 12V14H2Z" fill="#efb92f" stroke="#b58a1c" /><path d="M3 8L5 2L9 4L8 8Z" fill="#313b46" /></svg>
    {#each menus as m}<button>{m}</button>{/each}
    <div class="mdi">
      <button aria-label="Minimize drawing"><svg viewBox="0 0 14 12"><path d="M4 8.500H9" stroke="#4b647f" stroke-width="1.500" /></svg></button>
      <button aria-label="Restore drawing"><svg viewBox="0 0 14 12"><path d="M5.500 4V2.500H11V7H9.500M3.500 5H9V9.500H3.500Z" fill="none" stroke="#4b647f" /></svg></button>
      <button aria-label="Close drawing"><svg viewBox="0 0 14 12"><path d="M3 3L8 9M8 3L3 9" stroke="#4b647f" stroke-width="1.500" /></svg></button>
    </div>
  </nav>

  <div class="bars">
    <div class="row">
      <div class="bar"><span class="grip"></span>{#each standard as n}{@render tool(n)}{/each}</div>
      <div class="bar">
        <span class="grip"></span>
        {#each styles as [n, label], i}
          {#if i}<span class="sep thin"></span>{/if}
          {@render tool(n)}{@render combo(label, 'Standard', 'w80 dim')}
        {/each}
      </div>
      <div class="bar"><span class="grip"></span>{#each inquiry as n}{@render tool(n)}{/each}</div>
    </div>
    <div class="row">
      <div class="bar"><span class="grip"></span>{@render combo('Workspace', 'AutoCAD Classic', 'w140 grey')}{@render tool('gear')}{@render tool('home')}</div>
      <div class="bar"><span class="grip"></span>{@render tool('layers')}{@render combo('Layer', '0', 'w240 lyr')}{@render tool('lmake')}{@render tool('lprev')}</div>
      <div class="bar">
        <span class="grip"></span>
        {@render combo('Color', 'ByBlock', 'w120 clr')}<span class="sep thin"></span>
        {@render combo('Linetype', 'ByLayer', 'w130 rule long')}<span class="sep thin"></span>
        {@render combo('Lineweight', 'ByLayer', 'w100 rule')}<span class="sep thin"></span>
        {@render combo('Plot style', 'ByColor', 'w100 grey shade dim')}
      </div>
    </div>
  </div>

  <main class="work">
    <aside class="rails left">{@render rails(left)}</aside>
    <section class="view">
      <div class="canvas">
        <svg class="drawing" width="820" height="430" aria-hidden="true">
          <path d="M478.500 61V312M373 159.500H478" stroke="#fff" fill="none" />
          <path d="M103 .5H168M133 1L137 4L141 1" stroke="#aaa" fill="none" />
          <text x="226" y="396">Menggunakan Trim Dan Extend</text>
        </svg>
        <svg class="ucs" width="110" height="110" aria-hidden="true">
          <path d="M10.500 89.500H19.500V98.500H10.500ZM14.500 89V47M20 93.500H61" />
          <path d="M14.500 37L19 47H10ZM72 93.500L61 89V98Z" fill="#555" />
          <text x="11" y="29">Y</text><text x="81" y="99">X</text>
        </svg>
      </div>
      <div class="tabs">
        {#each ['M4 3V9M10 3L6 6L10 9Z', 'M9 3L5 6L9 9Z', 'M5 3L9 6L5 9Z', 'M10 3V9M4 3L8 6L4 9Z'] as d, i}
          <button class="nav" aria-label={['First', 'Previous', 'Next', 'Last'][i]}><svg viewBox="0 0 14 12"><path {d} fill="#000" stroke="#000" /></svg></button>
        {/each}
        <button class="tab on">Model</button>
        <button class="tab">Layout1</button>{@render slash()}
        <button class="tab">Layout2</button>{@render slash()}
      </div>
    </section>
    <aside class="rails right">{@render rails(right)}</aside>
  </main>

  <section class="command">
    <span class="grip"></span>
    <div class="console">
      <div class="history">{#each history as h}<p>{h}</p>{/each}</div>
      <div class="prompt"><label for="cmd">Command:</label><input id="cmd" type="text" /></div>
    </div>
    <div class="scroll"><i class="tri up"></i><span class="thumb"></span><i class="tri"></i></div>
  </section>

  <footer class="status">
    <output>382.1079, -72.0739, 0.0000</output>
    {#each modes as [m, on]}<button class:on={on}>{m}</button>{/each}
    <div class="tray">{@render icon('warn')}{@render icon('lock')}{@render icon('std')}<i class="tri"></i>{@render icon('screen')}</div>
  </footer>

  <div class="taskbar">
    <button class="start" aria-label="Start">
      <svg viewBox="0 0 32 32"><circle cx="16" cy="16" r="15" fill="url(#orb)" stroke="#a9c3d2" /><path d="M7 11C10 8 13 9 15 10L14 16C11 14 9 15 6 16Z" fill="#e7602b" /><path d="M17 11C20 12 23 12 26 10L24 17C21 18 18 18 16 17Z" fill="#8ec63f" /><path d="M6 18C9 16 11 16 13 18L12 24C9 22 7 22 4 24Z" fill="#4fa8e0" /><path d="M15 19C18 20 21 20 24 18L22 25C19 26 17 26 14 25Z" fill="#fbc82e" /></svg>
    </button>
    {#each apps as [name, cls, art]}
      <button class="app-btn {cls}" aria-label={name}><svg viewBox="0 0 32 32">{@html art}</svg></button>
    {/each}
    <div class="notify">
      <svg viewBox="0 0 16 16"><path d="M4 10L8 6L12 10Z" fill="#fff" /></svg>
      <svg viewBox="0 0 16 16"><path d="M4 2V15M4 3H12V9H4" stroke="#fff" stroke-width="1.500" fill="#ddd" /><circle cx="11" cy="11" r="4" fill="#d8302f" /><path d="M9 9L13 13M13 9L9 13" stroke="#fff" stroke-width="1.300" /></svg>
      <svg viewBox="0 0 16 16"><path d="M5 4H14V12H5ZM1 2H4V6H1ZM3 6V14H10" fill="none" stroke="#eee" stroke-width="1.500" /><path d="M11 6L15 14H7Z" fill="#f4d53b" stroke="#75620b" /></svg>
      <svg viewBox="0 0 16 16"><path d="M2 6H5L9 2V14L5 10H2Z" fill="#fff" /><path d="M11 5C12 7 12 9 11 11M13 3C15 6 15 10 13 13" stroke="#ddd" fill="none" /></svg>
      <div class="clock"><span>5:08 PM</span><span>7/9/2025</span></div>
      <span class="peek"></span>
    </div>
  </div>

  <div class="balloon" role="status">
    <div class="head">
      <svg viewBox="0 0 14 14" aria-hidden="true"><circle cx="7" cy="7" r="6" fill="#2d5fc4" stroke="#7d9bd8" /><path d="M7 6V11M7 3V4.500" stroke="#fff" stroke-width="2" /></svg>
      <strong>Communication Center</strong>
      <button aria-label="Dismiss"><svg viewBox="0 0 12 12"><path d="M3 3L9 9M9 3L3 9" stroke="#000" stroke-width="1.800" /></svg></button>
    </div>
    <p>The easy way to keep you and your software up-to-date.</p>
    <a href="#center">Click here.</a>
    <svg class="tail" viewBox="0 0 20 18" aria-hidden="true"><path d="M2 0L15 16V0" fill="#ffffe1" /><path d="M1 1L15 16V1" fill="none" stroke="#222" /></svg>
  </div>
</div>

<style>
  :global(body) { margin: 0; overflow: hidden; background: #f0f0f0; }
  .app { position: relative; display: flex; flex-direction: column; height: 100vh; overflow: hidden; background: #f0f0f0; color: #111; font: 10px/12px Roboto, "Liberation Sans", sans-serif; }
  button { margin: 0; padding: 0; border: 0; background: none; color: inherit; font: inherit; flex: none; }
  svg { display: block; flex: none; }
  .defs { position: absolute; width: 0; height: 0; }
  .ico { width: 16px; height: 16px; }
  .tri { width: 0; height: 0; border: 3px solid transparent; border-top-color: #000; border-bottom: 0; }
  .tri.up { border-top: 0; border-bottom: 3px solid #333; }

  .title { display: flex; align-items: center; height: 17px; flex: none; background: linear-gradient(90deg, #a6a6a6, #bcbcbc 70px, #b0b0b0 230px, #8d8d8d 300px, #7f7f7f 400px, #7f7f7f 90%, #8f8f8f); }
  .logo { width: 14px; height: 15px; margin: 0 2px 0 1px; }
  h1 { margin: 0; flex: 1; color: #161616; font: 400 10px/16px Roboto, sans-serif; text-shadow: 0 0 5px #ddd; white-space: nowrap; }
  .caption { display: flex; align-self: flex-start; border: 1px solid #4a4a4a; border-top: 0; border-right: 0; border-radius: 0 0 0 4px; overflow: hidden; }
  .caption button { height: 14px; background: linear-gradient(#c7c7c7, #858585 50%, #a5a5a5); border-right: 1px solid #555; }
  .caption svg { width: 21px; height: 14px; }
  .caption .close { background: linear-gradient(#e59a8a, #c23a22 50%, #d7664e); border: 0; }
  .caption .close svg { width: 34px; }

  .menu { display: flex; align-items: center; gap: 10px; height: 16px; flex: none; padding-left: 4px; border-top: 1px solid #eee; border-bottom: 1px solid #b5bac8; background: linear-gradient(#fdfdff, #e6eaf6 40%, #d5dbec 60%, #e0e5f3); }
  .doc { width: 15px; height: 15px; margin-right: -5px; }
  .mdi { display: flex; gap: 2px; margin-left: auto; margin-right: -9px; }
  .mdi button { border: 1px solid #a7b9d2; background: #edf2fa; }
  .mdi svg { width: 13px; height: 11px; }

  .bars { flex: none; border-bottom: 1px solid #777; }
  .row { display: flex; height: 22px; }
  .bar { display: flex; align-items: center; flex: none; padding: 0 2px 0 4px; border-right: 1px solid #aaa; border-bottom: 1px solid #c4c4c4; }
  .bar .grip, .command .grip { width: 1px; height: 19px; margin-right: 5px; border: solid #aaa; border-width: 0 1px; }
  .bar .grip { box-shadow: 1px 0 #fff, -1px 0 #fff; }
  .tool { display: grid; place-items: center; width: 18px; height: 18px; }
  .sep { flex: none; width: 1px; height: 15px; margin: 0 3px; background: #888; }
  .sep.thin { margin: 0 2px; }
  .drop { display: grid; place-items: center; width: 10px; height: 18px; }
  .drop.off .tri { border-top-color: #bbb; }
  .combo { display: flex; align-items: center; box-sizing: border-box; height: 19px; padding: 0 4px 0 3px; border: 1px solid #b5b5b5; background: #fff; flex: none; }
  select { flex: 1; min-width: 0; height: 16px; margin: 0; padding: 0; border: 0; background: none; color: #111; font: 9px/12px Roboto, sans-serif; appearance: none; }
  .grey select { color: #8b8b8b; }
  .dim .tri { border-top-color: #aaa; }
  .shade { background: #eee; }
  .w80 { width: 80px; } .w140 { width: 140px; } .w240 { width: 242px; } .w120 { width: 120px; } .w130 { width: 130px; } .w100 { width: 100px; }
  .lyr, .clr, .w140 { border-color: #e2e2e2; }
  .lyr .ico { width: 13px; height: 16px; }
  .lyr select { padding-left: 2px; }
  .clr .ico { width: 12px; height: 12px; }
  .stroke { width: 32px; height: 1px; margin-right: 4px; background: #555; }
  .long .stroke { width: 48px; }

  .work { display: flex; flex: 1; min-height: 0; }
  .rails { display: flex; flex: none; overflow: hidden; }
  .left { width: 63px; border-right: 1px solid #777; }
  .right { width: 76px; padding-left: 2px; }
  .rail { flex: none; width: 21px; }
  .vbar { display: flex; flex-direction: column; align-items: center; box-sizing: border-box; width: 20px; padding-bottom: 4px; border: solid #aaa; border-width: 0 1px 1px 0; box-shadow: 1px 0 #fff; }
  .vbar .grip { width: 17px; height: 2px; margin: 1px 0 3px; border: solid #aaa; border-width: 1px 0; }
  .vbar .tool:nth-of-type(3n) { height: 17px; }
  .vbar .sep { width: 15px; height: 1px; margin: 2px 0; background: #aaa; }
  .view { display: flex; flex-direction: column; flex: 1; min-width: 0; }
  .canvas { position: relative; flex: 1; background: #000; overflow: hidden; }
  .drawing { position: absolute; left: 0; top: 0; }
  .drawing text { fill: #fff; font: 44px "Liberation Serif", serif; stroke: #fff; stroke-width: 0.5px; }
  .ucs { position: absolute; left: 0; bottom: 0; fill: none; stroke: #ddd; }
  .ucs text { fill: #ddd; stroke: none; font: 300 16px Roboto, sans-serif; }
  .tabs { display: flex; height: 12px; flex: none; }
  .nav { width: 15px; border-right: 1px solid #ccc; background: #fff; }
  .nav svg { width: 14px; height: 12px; }
  .tab { padding: 0 1px; background: #fff; font-size: 9px; line-height: 12px; }
  .tab.on { padding: 0 6px; background: #000; color: #fff; clip-path: polygon(0 0, 100% 0, calc(100% - 4px) 100%, 4px 100%); }
  .slash { width: 6px; height: 12px; background: #fff; }

  .command { position: relative; display: flex; height: 80px; flex: none; margin-top: 6px; padding: 8px 0 3px 5px; border-top: 1px solid #777; box-shadow: 0 -3px #fff; }
  .command .grip { height: 76px; width: 2px; margin-right: 4px; }
  .console { display: flex; flex-direction: column; flex: 1; border: solid #777; border-width: 2px 0 0 2px; background: #fff; font: 11px/13px "Liberation Mono", monospace; }
  .history { flex: 1; border-bottom: 1px solid #bbb; }
  .history p { margin: 0; white-space: pre; }
  .prompt { display: flex; height: 15px; align-items: center; }
  .prompt input { flex: 1; min-width: 0; height: 13px; padding: 0 4px; border: 0; outline: 0; background: none; font: inherit; }
  .scroll { display: flex; flex-direction: column; align-items: center; justify-content: space-between; width: 12px; height: 52px; padding: 6px 0 4px; background: #f2f2f2; }
  .thumb { width: 10px; height: 11px; margin-top: 25px; border: 1px solid #999; background: linear-gradient(90deg, #f8f8f8, #ccc); }

  .status { display: flex; align-items: center; gap: 3px; height: 15px; flex: none; padding-left: 4px; border-top: 1px solid #999; box-shadow: inset 0 1px #fff; font-size: 9px; }
  output { box-sizing: border-box; width: 133px; height: 13px; margin-right: 1px; padding-left: 1px; border: 1px solid; border-color: #999 #ccc #ccc #999; color: #a5a5a5; line-height: 12px; }
  .status button { height: 13px; padding: 0 1px; border: 1px solid; border-color: #f0f0f0 #aaa #aaa #f0f0f0; line-height: 12px; }
  .status button.on { border-color: #666 #ddd #ddd #666; }
  .tray { display: flex; align-items: center; margin-left: auto; margin-right: -6px; }
  .tray .ico { height: 14px; }
  .tray .tri { margin: 2px 7px 0; }

  .taskbar { display: flex; height: 28px; flex: none; overflow: hidden; border-top: 1px solid #252525; box-sizing: border-box; background: radial-gradient(circle at 330px 8px, #777 10px, transparent 90px), radial-gradient(circle at 620px 10px, #3d4034, transparent 90px), radial-gradient(circle at 930px 30px, #6a6745, transparent 70px), radial-gradient(circle at 1030px 30px, #4d4c2f, transparent 80px), linear-gradient(90deg, #2c3a45, #70757d 60px, #747981 200px, #6c6e72 330px, #34332f 400px, #30322c 500px, #525441 560px, #272a22 720px, #4b4d34 800px, #45462f 930px, #34341f 1050px, #17190f 1140px, #282715); }
  .taskbar svg { width: 32px; height: 32px; }
  .start { display: flex; justify-content: center; width: 44px; margin-right: 3px; }
  .app-btn { display: flex; justify-content: center; box-sizing: border-box; width: 48px; height: 36px; margin-right: 2px; border: 1px solid transparent; border-radius: 3px; }
  .taskbar .app-btn svg { width: 29px; height: 29px; }
  .open { border-color: #c9c9c9aa; background: linear-gradient(135deg, #ffffff66, #ffffff1c); }
  .lit { background: linear-gradient(135deg, #fffffff0, #ffffff88); }
  .snip { border-color: #b74444; background: #3a1b1b99; }
  .notify { display: flex; align-items: center; gap: 4px; margin-left: auto; padding-top: 2px; }
  .taskbar .notify svg { width: 15px; height: 15px; }
  .clock { display: flex; flex-direction: column; align-items: center; margin: 0 9px 0 14px; color: #fff; line-height: 13px; font-size: 9px; }
  .peek { width: 4px; height: 28px; border-left: 1px solid #888; background: #343526; }

  .balloon { position: absolute; right: 14px; bottom: 52px; box-sizing: border-box; width: 237px; height: 62px; padding: 7px 7px 0 12px; border: 1px solid #333; border-radius: 11px; background: #ffffe1; font: 9px/12px Lato, "Liberation Sans", sans-serif; }
  .head { display: flex; align-items: center; height: 14px; margin-left: -5px; }
  .head > svg { width: 13px; height: 13px; margin-right: 8px; }
  .head strong { flex: 1; font: 700 10px/12px Roboto, sans-serif; color: #000; }
  .head button { border: 1px solid #999; background: #fff; }
  .head button svg { width: 10px; height: 10px; }
  .balloon p { margin: 4px 0 3px; white-space: nowrap; }
  .balloon a { color: #2222c8; }
  .tail { position: absolute; left: 166px; top: 59px; width: 20px; height: 18px; }
</style>
